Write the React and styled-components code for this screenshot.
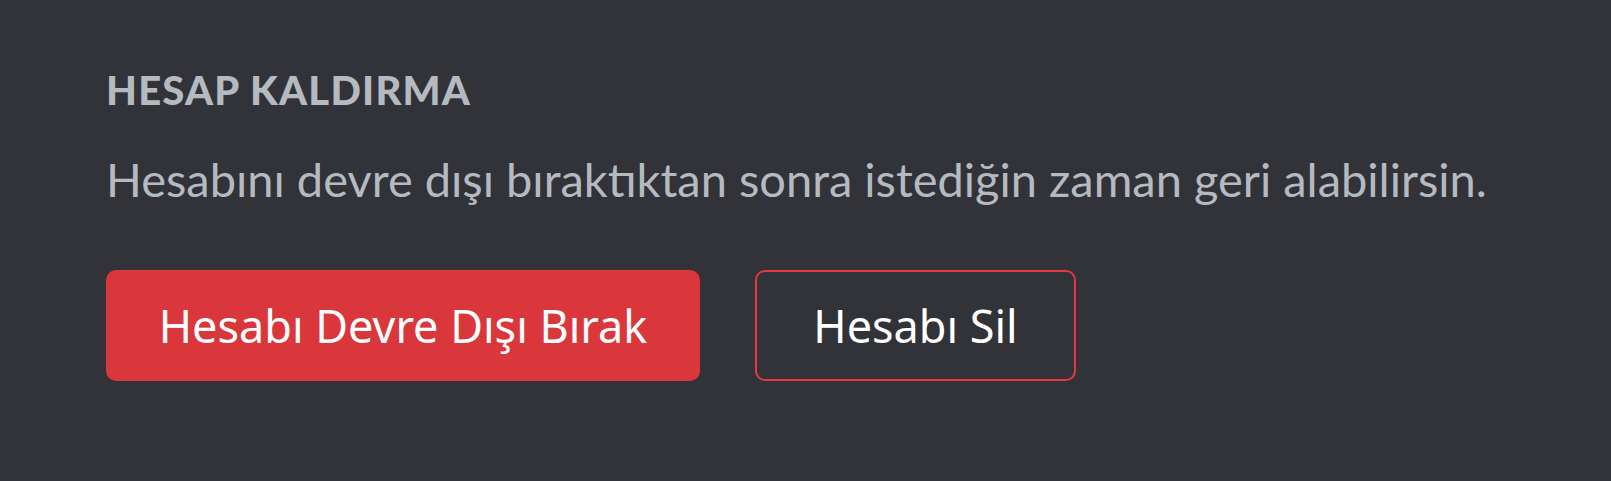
import React from "react";
import styled, { createGlobalStyle } from "styled-components";

const Global = createGlobalStyle`
  html, body { margin: 0; padding: 0; background: #313338; }
  body { font-family: Lato, "Noto Sans", sans-serif; }
`;

const Page = styled.div`
  width: 1611px;
  height: 481px;
  box-sizing: border-box;
  padding: 66px 0 0 106px;
  background: #313338;
`;

const Heading = styled.h2`
  margin: 0;
  font-size: 40px;
  line-height: 48px;
  font-weight: 900;
  letter-spacing: 0.03em;
  color: #b5bac1;
  text-transform: uppercase;
`;

const Description = styled.p`
  margin: 35px 0 0;
  font-size: 47px;
  line-height: 60px;
  font-weight: 400;
  color: #b5bac1;
  white-space: nowrap;
`;

const Actions = styled.div`
  display: flex;
  gap: 55px;
  margin-top: 61px;
`;

const Button = styled.button`
  box-sizing: border-box;
  height: 111px;
  width: ${(p) => p.$width}px;
  border-radius: 10px;
  font-family: "Noto Sans", Lato, sans-serif;
  font-size: 45px;
  font-weight: 400;
  color: #ffffff;
  cursor: pointer;
  display: flex;
  align-items: center;
  justify-content: center;
  padding: 0;
  background: ${(p) => (p.$outline ? "transparent" : "#da373c")};
  border: ${(p) => (p.$outline ? "2.5px solid #e5393e" : "none")};
`;

export default function App() {
  return (
    <>
      <Global />
      <Page>
        <Heading>Hesap Kaldırma</Heading>
        <Description>
          Hesabını devre dışı bıraktıktan sonra istediğin zaman geri alabilirsin.
        </Description>
        <Actions>
          <Button $width={594}>Hesabı Devre Dışı Bırak</Button>
          <Button $width={321} $outline>
            Hesabı Sil
          </Button>
        </Actions>
      </Page>
    </>
  );
}
